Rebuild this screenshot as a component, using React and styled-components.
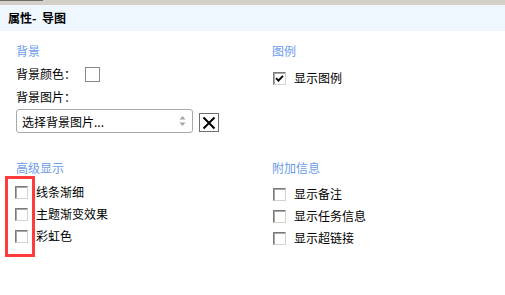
import React from 'react'
import styled, { createGlobalStyle } from 'styled-components'

const GlobalStyle = createGlobalStyle`
  html, body {
    margin: 0;
    padding: 0;
    background: #ffffff;
  }
  body {
    font-family: "Noto Sans CJK SC", "Noto Sans", sans-serif;
    font-size: 12px;
    color: #000;
  }
`

const Page = styled.div`
  position: relative;
  width: 505px;
  height: 295px;
  overflow: hidden;
  background: #fff;
`

const TopStrip = styled.div`
  height: 5px;
  background: #d4d0c8;
  span {
    display: block;
    width: 43px;
    height: 1px;
    background: #6b6b6b;
  }
`

const Header = styled.div`
  height: 26px;
  line-height: 26px;
  padding-left: 8px;
  background: #eef6ff;
  font-weight: bold;
  white-space: pre;
`

const Content = styled.div`
  display: grid;
  grid-template-columns: 256px 1fr;
  row-gap: 27px;
  padding: 12px 16px 0;
`

const Section = styled.div`
  display: flex;
  flex-direction: column;
`

const Heading = styled.div`
  line-height: 16px;
  color: #6b9cec;
`

const FieldRow = styled.div`
  display: flex;
  align-items: center;
  height: 16px;
  line-height: 16px;
  margin-top: 7px;
`

const ColorBox = styled.span`
  display: inline-block;
  box-sizing: border-box;
  width: 15px;
  height: 15px;
  margin-left: 9px;
  border: 1px solid #8a8a8a;
  background: #fff;
`

const PickerRow = styled.div`
  display: flex;
  align-items: center;
  margin-top: 4px;
`

const SelectBox = styled.div`
  box-sizing: border-box;
  width: 177px;
  height: 24px;
  display: flex;
  align-items: center;
  justify-content: space-between;
  padding: 0 6px 0 5px;
  border: 1px solid #a9a9a9;
  border-radius: 3px;
  background: #fff;
`

const ClearButton = styled.div`
  box-sizing: border-box;
  width: 20px;
  height: 19px;
  margin-left: 6px;
  margin-top: 3px;
  border: 1px solid #6e6e6e;
  display: flex;
  align-items: center;
  justify-content: center;
  background: #fff;
`

const CheckList = styled.div`
  display: flex;
  flex-direction: column;
  gap: 6px;
  margin-top: ${p => p.$top}px;
`

const CheckRow = styled.label`
  display: flex;
  align-items: center;
  height: 16px;
  line-height: 16px;
  gap: 8px;
  margin-left: ${p => p.$shift || 0}px;
`

const Box = styled.span`
  position: relative;
  box-sizing: border-box;
  width: 13px;
  height: 13px;
  flex: none;
  border: 1px solid;
  border-color: #7a7a7a #d6d2ca #d6d2ca #7a7a7a;
  box-shadow: inset 1px 1px 0 #a8a8a8;
  background: #fff;
  display: flex;
  align-items: center;
  justify-content: center;
`

const Highlight = styled.div`
  position: absolute;
  left: 5px;
  top: 176px;
  width: 30px;
  height: 81px;
  box-sizing: border-box;
  border: 3px solid #ff3b3b;
  pointer-events: none;
`

const Check = ({ checked, label, shift }) => (
  <CheckRow $shift={shift}>
    <Box>
      {checked && (
        <svg width="9" height="9" viewBox="0 0 9 9">
          <path d="M1 4.2 L3.4 6.6 L8 1.8" fill="none" stroke="#000" strokeWidth="1.8" />
        </svg>
      )}
    </Box>
    <span>{label}</span>
  </CheckRow>
)

export default function App() {
  return (
    <Page>
      <GlobalStyle />
      <TopStrip><span /></TopStrip>
      <Header>{'属性-  导图'}</Header>
      <Content>
        <Section>
          <Heading>背景</Heading>
          <FieldRow>
            背景颜色：
            <ColorBox />
          </FieldRow>
          <FieldRow>背景图片：</FieldRow>
          <PickerRow>
            <SelectBox>
              <span>选择背景图片...</span>
              <svg width="7" height="14" viewBox="0 0 7 14">
                <path d="M3.5 2 L6.5 5.5 H0.5 Z" fill="#a6a6a6" />
                <path d="M3.5 12 L6.5 8.5 H0.5 Z" fill="#a6a6a6" />
              </svg>
            </SelectBox>
            <ClearButton>
              <svg width="14" height="14" viewBox="0 0 14 14">
                <path d="M1.5 1.5 L12.5 12.5 M12.5 1.5 L1.5 12.5" stroke="#000" strokeWidth="2" />
              </svg>
            </ClearButton>
          </PickerRow>
        </Section>
        <Section>
          <Heading>图例</Heading>
          <CheckList $top={11}>
            <Check checked label="显示图例" shift={1} />
          </CheckList>
        </Section>
        <Section>
          <Heading>高级显示</Heading>
          <CheckList $top={8}>
            <Check label="线条渐细" shift={-1} />
            <Check label="主题渐变效果" shift={-1} />
            <Check label="彩虹色" shift={-1} />
          </CheckList>
        </Section>
        <Section>
          <Heading>附加信息</Heading>
          <CheckList $top={10}>
            <Check label="显示备注" shift={1} />
            <Check label="显示任务信息" shift={1} />
            <Check label="显示超链接" shift={1} />
          </CheckList>
        </Section>
      </Content>
      <Highlight />
    </Page>
  )
}
